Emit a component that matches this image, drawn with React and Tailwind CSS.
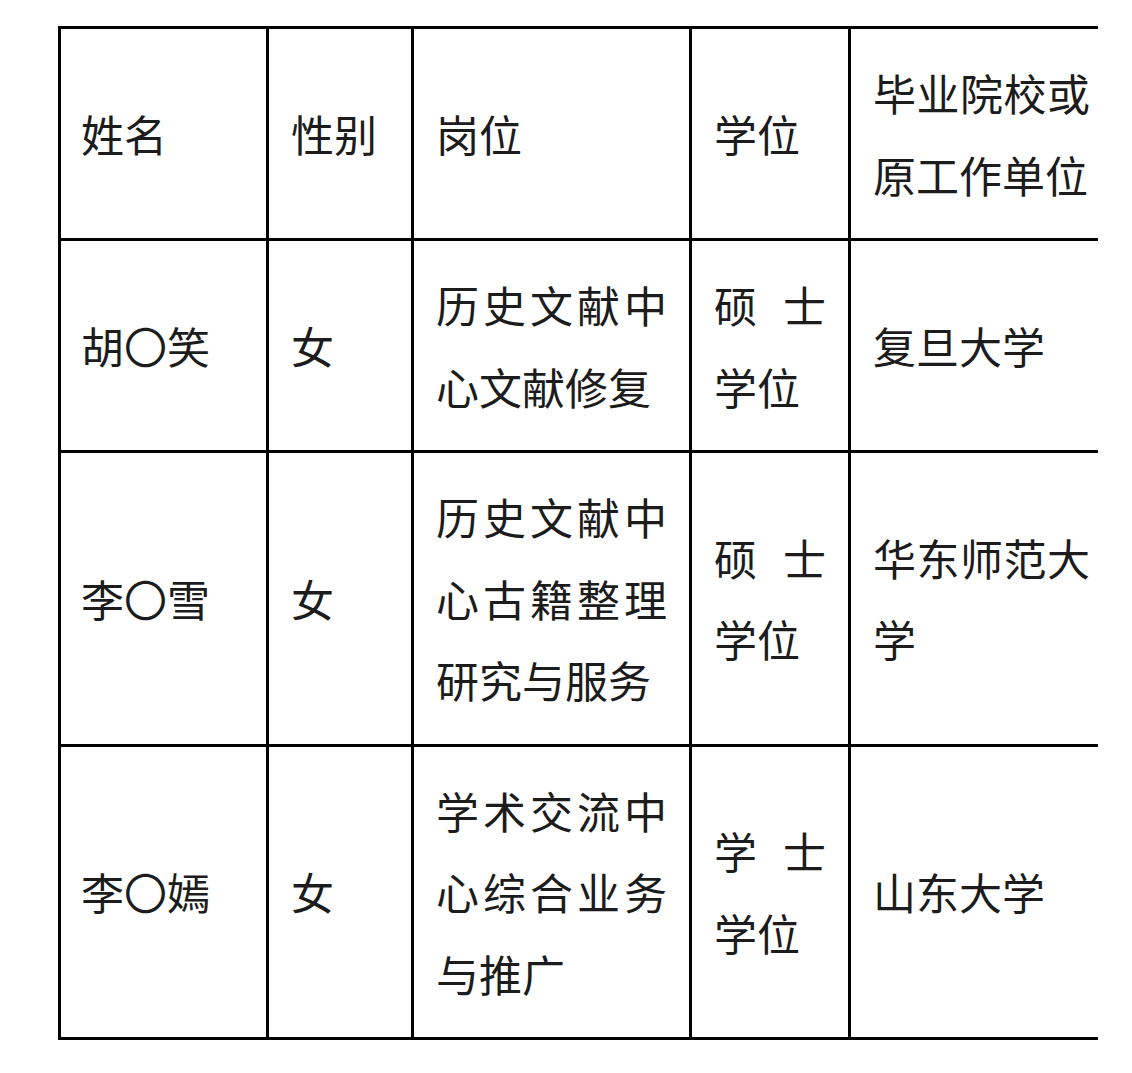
import React from "react";

const rows = [
  ["姓名", "性别", "岗位", "学位", "毕业院校或原工作单位"],
  ["胡〇笑", "女", "历史文献中心文献修复", "硕士学位", "复旦大学"],
  ["李〇雪", "女", "历史文献中心古籍整理研究与服务", "硕士学位", "华东师范大学"],
  ["李〇嫣", "女", "学术交流中心综合业务与推广", "学士学位", "山东大学"],
];

export default function App() {
  return (
    <div className="min-h-[1073px] w-[1132px] bg-white pt-[26px] pl-[58px]">
      <div className="w-[1040px] overflow-hidden">
        <div
          className="grid w-[1057px] grid-cols-[208px_145px_278px_159px_264px] border-l-[3px] border-t-[3px] border-black text-[43px] leading-[81.5px] text-[#1c1c1c]"
          style={{ fontFamily: '"Noto Sans CJK SC", "Noto Sans", sans-serif' }}
        >
          {rows.map((row, ri) =>
            row.map((cell, ci) => (
              <div
                key={`${ri}-${ci}`}
                className={
                  ci === 0
                    ? "flex items-center border-b-[3px] border-r-[3px] border-black pl-[20px] pr-[22px] py-[23px]"
                    : "flex items-center border-b-[3px] border-r-[3px] border-black px-[22px] py-[23px]"
                }
              >
                <div className="w-full text-justify">{cell}</div>
              </div>
            ))
          )}
        </div>
      </div>
    </div>
  );
}
